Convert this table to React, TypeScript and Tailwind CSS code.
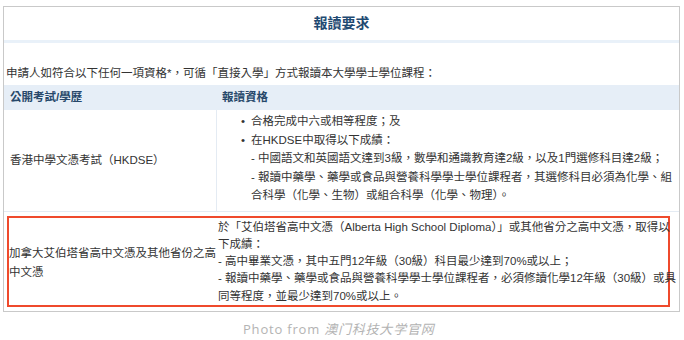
const font = "font-['Liberation_Sans','Noto_Sans_CJK_TC',sans-serif]";

const dseLines = [
  "- 中國語文和英國語文達到3級，數學和通識教育達2級，以及1門選修科目達2級；",
  "- 報讀中藥學、藥學或食品與營養科學學士學位課程者，其選修科目必須為化學、組",
  "合科學（化學、生物）或組合科學（化學、物理）。",
];

const albertaLines = [
  "於「艾伯塔省高中文憑（Alberta High School Diploma）」或其他省分之高中文憑，取得以",
  "下成績：",
  "- 高中畢業文憑，其中五門12年級（30級）科目最少達到70%或以上；",
  "- 報讀中藥學、藥學或食品與營養科學學士學位課程者，必須修讀化學12年級（30級）或具",
  "同等程度，並最少達到70%或以上。",
];

export default function App() {
  return (
    <div className={`h-[340px] w-[684px] bg-white pt-[6px] text-[11.5px] text-[#333] ${font}`}>
      <div className="ml-[3px] w-[677px] border border-[#c9c9c9]">
        <div className="flex h-[36px] items-center justify-center border-b-[3px] border-[#e9f1f9] text-[14px] font-bold text-[#1f4a72]">
          報讀要求
        </div>

        <p className="whitespace-nowrap pl-[2px] pt-[22px] pb-[3px] leading-[17px]">
          申請人如符合以下任何一項資格*，可循「直接入學」方式報讀本大學學士學位課程：
        </p>

        <div className="flex h-[25px] items-center bg-[#e6eef7] font-bold text-[#27486a]">
          <div className="w-[213px] shrink-0 pl-[6px]">公開考試/學歷</div>
          <div className="pl-[5px]">報讀資格</div>
        </div>

        <div className="flex border-b border-[#e4ebf3]">
          <div className="flex w-[213px] shrink-0 items-center border-r border-[#e4ebf3] pl-[6px]">
            香港中學文憑考試（HKDSE）
          </div>
          <div className="pt-[2px] pb-[6px] leading-[18.5px]">
            <ul className="pl-[24px]">
              <li className="flex gap-[6px]">
                <span>•</span>
                <span>合格完成中六或相等程度；及</span>
              </li>
              <li className="flex gap-[6px]">
                <span>•</span>
                <div>
                  <div>在HKDSE中取得以下成績：</div>
                  {dseLines.map((line) => (
                    <div key={line} className="whitespace-nowrap">
                      {line}
                    </div>
                  ))}
                </div>
              </li>
            </ul>
          </div>
        </div>

        <div className="pt-[4px] pb-[4px] pl-[3px] pr-[9px]">
          <div className="flex border-2 border-[#ef4a2c] leading-[17.25px]">
            <div className="flex w-[208px] shrink-0 items-center pt-[4px]">
              <div className="whitespace-nowrap leading-[19px]">
                加拿大艾伯塔省高中文憑及其他省份之高
                <br />
                中文憑
              </div>
            </div>
            <div className="pl-[1px] pt-[1px]">
              {albertaLines.map((line) => (
                <div key={line} className="whitespace-nowrap">
                  {line}
                </div>
              ))}
            </div>
          </div>
        </div>
      </div>

      <p className="mt-[7px] pl-[243px] text-[13px] tracking-[0.8px] text-[#b3b3b3]">
        <span className="font-['Open_Sans',sans-serif]">Photo from </span>
        <span className="font-['Noto_Sans_CJK_SC',sans-serif] italic">澳门科技大学官网</span>
      </p>
    </div>
  );
}
